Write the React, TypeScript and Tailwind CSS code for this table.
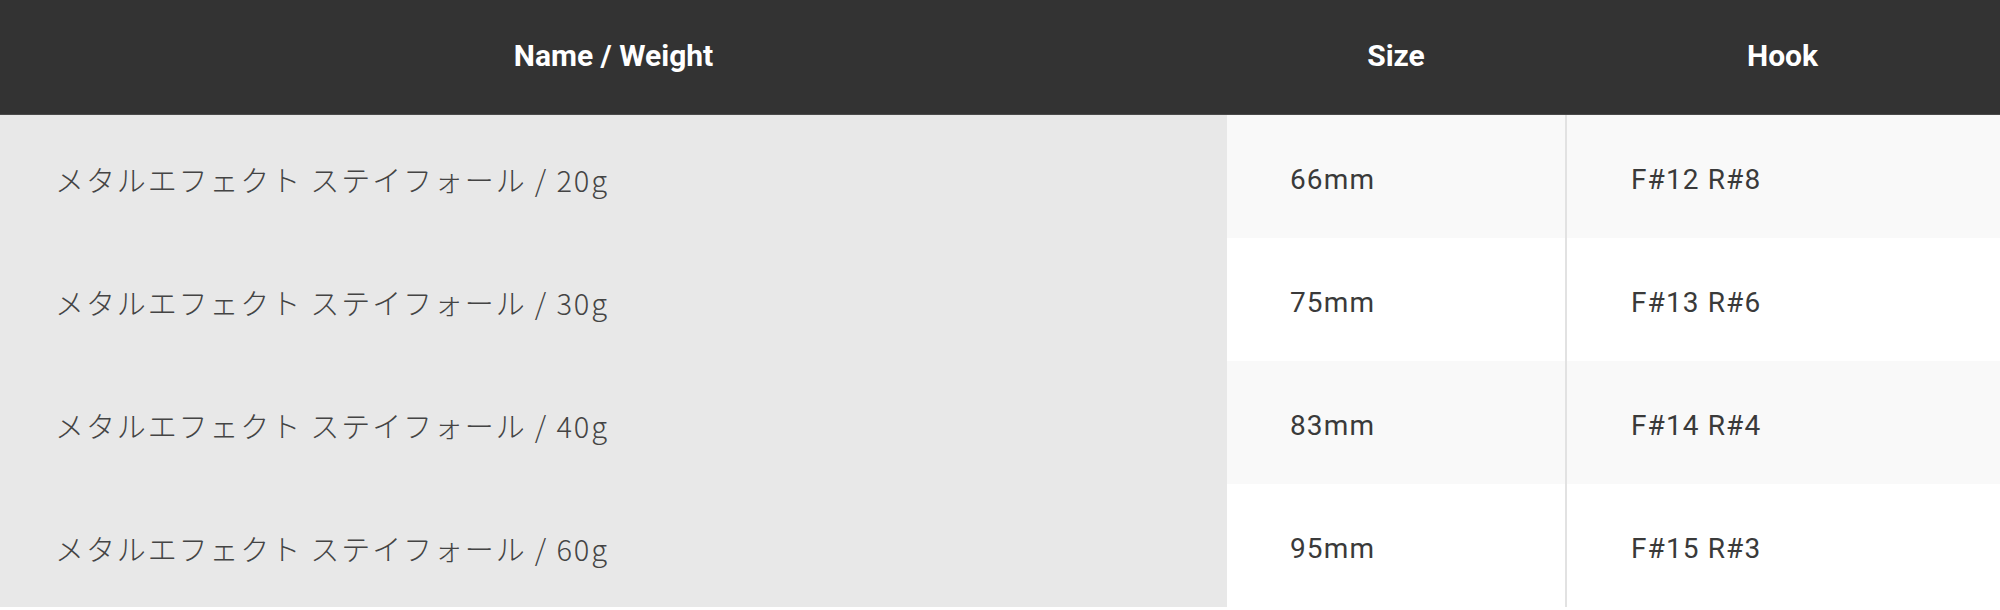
import React from "react";

const rows = [
  { name: "メタルエフェクト ステイフォール / 20g", size: "66mm", hook: "F#12 R#8" },
  { name: "メタルエフェクト ステイフォール / 30g", size: "75mm", hook: "F#13 R#6" },
  { name: "メタルエフェクト ステイフォール / 40g", size: "83mm", hook: "F#14 R#4" },
  { name: "メタルエフェクト ステイフォール / 60g", size: "95mm", hook: "F#15 R#3" },
];

export default function App() {
  return (
    <div className="w-[2000px] h-[610px] bg-white overflow-hidden" style={{ fontFamily: "Roboto, 'Noto Sans CJK JP', sans-serif" }}>
      <div className="grid grid-cols-[1227px_338px_435px]">
        <div className="h-[115px] pb-[4px] bg-[#333333] flex items-center justify-center text-white font-bold text-[30px] border-b border-[#4a4a4a]">
          Name / Weight
        </div>
        <div className="h-[115px] pb-[4px] bg-[#333333] flex items-center justify-center text-white font-bold text-[30px] border-b border-[#4a4a4a]">
          Size
        </div>
        <div className="h-[115px] pb-[4px] bg-[#333333] flex items-center justify-center text-white font-bold text-[30px] border-b border-[#4a4a4a]">
          Hook
        </div>
        {rows.map((r, i) => (
          <React.Fragment key={r.size}>
            <div className="h-[123px] pt-[7px] bg-[#e8e8e8] flex items-center pl-[55px] text-[29px] font-light text-[#444444] tracking-[0.065em]" style={{ fontFamily: "'Noto Sans CJK JP', sans-serif" }}>
              {r.name}
            </div>
            <div className={`h-[123px] pt-[7px] flex items-center pl-[63px] text-[28px] text-[#3a3a3a] tracking-[0.04em] ${i % 2 === 0 ? "bg-[#f9f9f9]" : "bg-white"}`}>
              {r.size}
            </div>
            <div className={`h-[123px] pt-[7px] flex items-center pl-[64px] text-[28px] text-[#3a3a3a] tracking-[0.04em] border-l-2 border-[#e2e2e2] ${i % 2 === 0 ? "bg-[#f9f9f9]" : "bg-white"}`}>
              {r.hook}
            </div>
          </React.Fragment>
        ))}
      </div>
    </div>
  );
}
